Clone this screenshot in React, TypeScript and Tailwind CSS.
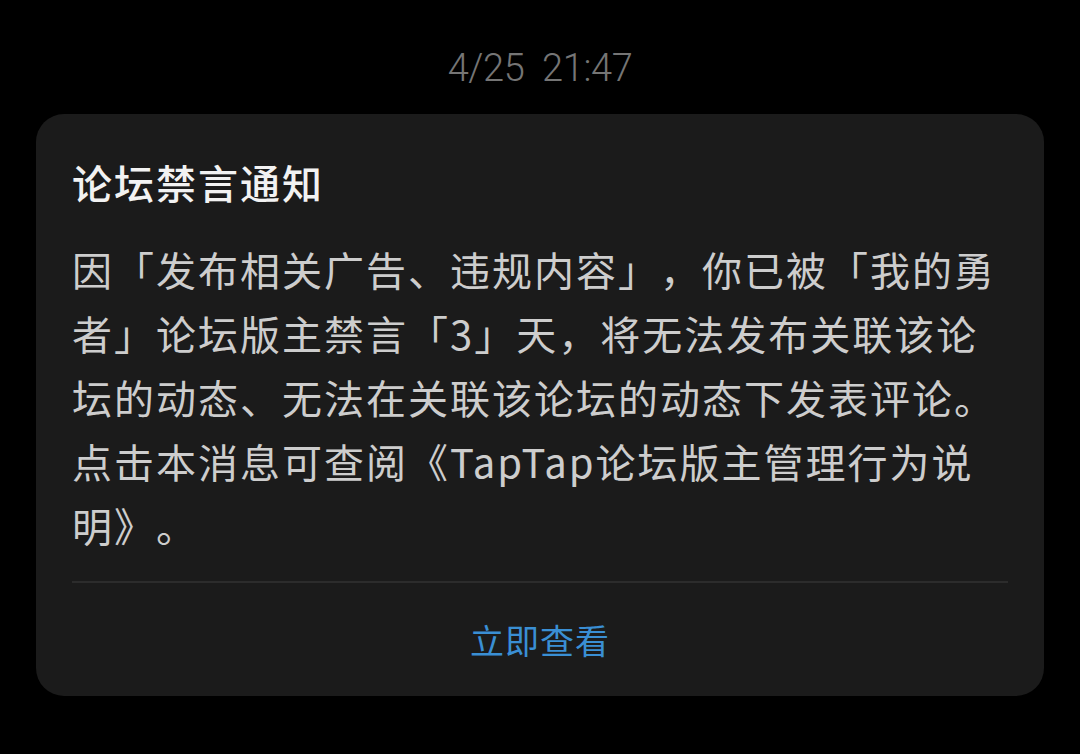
export default function App() {
  return (
    <div
      className="min-h-[754px] w-[1080px] bg-black"
      style={{ fontFamily: '"Noto Sans CJK SC", "Noto Sans", sans-serif' }}
    >
      <div className="flex flex-col pt-[48px]">
        {/* Timestamp */}
        <div
          className="h-[40px] text-center text-[38px] font-light leading-[40px] tracking-[-0.4px] text-[#757575]"
          style={{ fontFamily: 'Roboto, "Noto Sans CJK SC", sans-serif' }}
        >
          4/25&nbsp;&nbsp;21:47
        </div>

        {/* Card */}
        <div className="mx-[36px] mt-[26px] flex flex-col rounded-[28px] bg-[#1b1b1b] px-[36px] pt-[40px] [text-spacing-trim:space-all]">
          <div className="text-[40px] font-medium leading-[56px] tracking-[2px] text-[#f2f2f2]">论坛禁言通知</div>
          <div className="mt-[27px] whitespace-nowrap text-[40px] leading-[64px] tracking-[2px] text-[#cdcdcd]">
            因「发布相关广告、违规内容」，你已被「我的勇
            <br />
            者」论坛版主禁言「3」天，将无法发布关联该论
            <br />
            坛的动态、无法在关联该论坛的动态下发表评论。
            <br />
            点击本消息可查阅《TapTap论坛版主管理行为说
            <br />
            明》。
          </div>
          <div className="mt-[24px] h-[2px] bg-[#2c2c2c]" />
          <button className="flex h-[113px] items-center justify-center text-[34px] tracking-[1px] text-[#3a8fd4]">
            立即查看
          </button>
        </div>
      </div>
    </div>
  );
}
